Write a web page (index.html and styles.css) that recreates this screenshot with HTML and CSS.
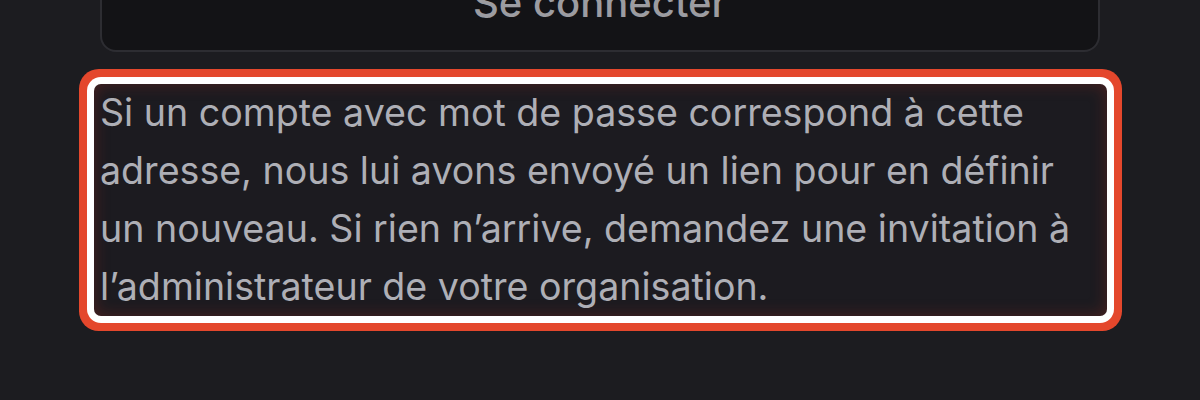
FILE: index.html
```html
<!DOCTYPE html>
<html lang="fr">
<head>
<meta charset="utf-8">
<title>Connexion</title>
<link rel="stylesheet" href="styles.css">
</head>
<body>
<main class="page">
  <button class="btn" type="button">Se connecter</button>
  <p class="notice" tabindex="-1">Si un compte avec mot de passe correspond à cette adresse, nous lui avons envoyé un lien pour en définir un nouveau. Si rien n’arrive, demandez une invitation à l’administrateur de votre organisation.</p>
</main>
</body>
</html>
```
FILE: styles.css
```css
html, body {
  margin: 0;
  padding: 0;
  background: #1c1c20;
  height: 100%;
  overflow: hidden;
}
.page {
  padding: 0 100px;
  font-family: Inter, "Noto Sans", sans-serif;
}
.btn {
  display: flex;
  align-items: center;
  justify-content: center;
  width: 100%;
  height: 100px;
  margin-top: -48px;
  box-sizing: border-box;
  border: 2px solid #2d2d32;
  border-radius: 16px;
  background: #131316;
  color: #9c9ca1;
  font-family: Inter, "Noto Sans", sans-serif;
  font-size: 40px;
  font-weight: 500;
}
.notice {
  margin: 32px -7px 0 -6px;
  padding: 0 7px 0 6px;
  color: #aeafb6;
  font-size: 37.6px;
  line-height: 58px;
  background: #1c1b20;
  border-radius: 7px;
  box-shadow: inset 0 0 16px rgba(190, 45, 30, 0.3), 0 0 0 7px #ffffff, 0 0 0 15px #e4472c;
  outline: none;
}
```
